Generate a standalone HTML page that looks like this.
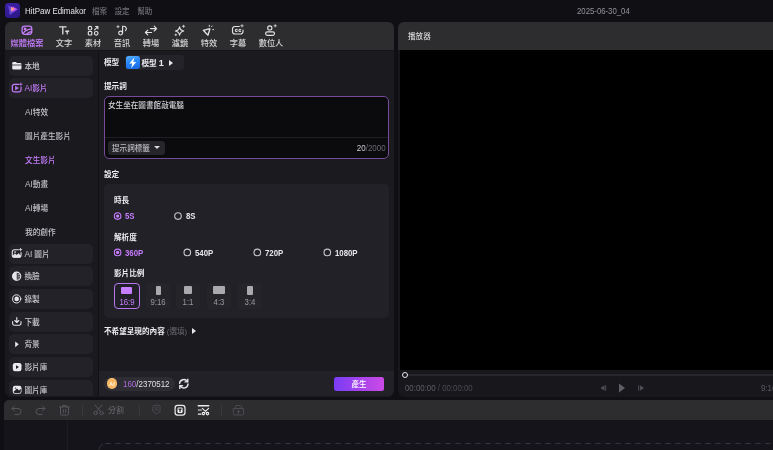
<!DOCTYPE html>
<html lang="zh-Hant">
<head>
<meta charset="utf-8">
<title>HitPaw Edimakor</title>
<style>
*{box-sizing:border-box;margin:0;padding:0}
html,body{width:773px;height:450px;overflow:hidden;background:#100f14}
body{position:relative;font-family:"Liberation Sans","Noto Sans CJK TC",sans-serif;color:#d8d8dc;font-size:8px;line-height:1}
#root{position:absolute;left:0;top:0;width:773px;height:450px;will-change:transform;overflow:hidden}
.abs{position:absolute}
.cj{margin-top:.6px;font-weight:500}
.la{font-size:108%}
.nx{transform:scaleX(.855);transform-origin:0 50%}
.nxr{transform:scaleX(.855);transform-origin:100% 50%}
.t{position:absolute;white-space:nowrap;line-height:12px;height:12px}
/* title bar */
#logo{left:4.5px;top:3.2px;width:15.2px;height:14.8px;border-radius:3.5px;background:linear-gradient(160deg,#3d22a8,#2a1684)}
/* left panel */
#lp{left:5px;top:22px;width:389px;height:374.5px;border-radius:6px;background:#1b1a1f;overflow:hidden}
#tb{left:0;top:0;width:389px;height:28px;background:#2d2d2f}
#sb{left:0;top:28px;width:93px;height:347px;background:#1a191e}
#sbline{left:93px;top:28px;width:1.2px;height:347px;background:#111015}
.si{position:absolute;left:4px;width:84.2px;height:20px;border-radius:5px;background:#232228}
.sl{margin-top:1px;position:absolute;left:20px;font-weight:500;font-size:7.65px;line-height:12px;color:#c9c9cf;white-space:nowrap}
.tl{margin-top:.6px;position:absolute;font-weight:500;font-size:8.2px;line-height:12px;top:15px;color:#d4d4d8;white-space:nowrap;transform:translateX(-50%)}
.ti{position:absolute;top:2px;width:14px;height:14px;transform:translateX(-50%)}
/* content */
#ta{left:103.5px;top:95.5px;width:285.5px;height:63px;border:1.1px solid #744a99;border-radius:5px;background:#0b0a0d}
#set{left:103.6px;top:184px;width:285.4px;height:134.4px;border-radius:5px;background:#222127}
.h{margin-top:.6px;position:absolute;font-weight:bold;font-size:7.6px;line-height:12px;color:#ececf0;white-space:nowrap}
.rd{position:absolute;width:7.6px;height:7.6px;margin:-.3px;border-radius:50%;border:1.1px solid #c8c8cc}
.rd.on{border-color:#c77dff}
.rd.on::after{content:"";position:absolute;left:1px;top:1px;width:3.4px;height:3.4px;border-radius:50%;background:#c77dff}
.rl{position:absolute;font-weight:bold;font-size:9.2px;transform:scaleX(.85);transform-origin:0 50%;line-height:12px;color:#e6e6ea;white-space:nowrap}
.rl.on{color:#c77dff}
.rb{position:absolute;top:282.5px;width:24px;height:26px;border-radius:4px;background:#252429}
.rb span{position:absolute;left:0;width:100%;text-align:center;top:13px;transform:scaleX(.855);font-size:9.1px;line-height:12px;color:#9a9aa2}
.rb i{position:absolute;background:#a9a9ae;border-radius:1px}
/* player */
#pp{left:398px;top:22px;width:380px;height:374.5px;border-radius:6px 0 0 6px;background:#18171c;overflow:hidden}
#ph{left:0;top:0;width:380px;height:28px;background:#2d2d2f}
#pv{left:1.5px;top:28px;width:380px;height:320px;background:#000}
/* timeline */
#tp{left:4px;top:400.2px;width:775px;height:60px;border-radius:5px 0 0 0;background:#15141b;overflow:hidden}
#tt{left:0;top:0;width:775px;height:19.5px;background:#2d2d2f}
</style>
</head>
<body>
<div id="root">
<!-- title bar -->
<div class="abs" id="logo">
<svg width="15.2" height="14.8" viewBox="0 0 15.2 14.8">
<path d="M3.2 2.4 L12.4 6.4 L4.8 12 Z" fill="#6f52e6" opacity=".85"/>
<path d="M7.4 3.2 L12.6 6.3 L7.4 9 Z" fill="#c850f0"/>
<path d="M6 3.8 L9.6 6.1 L6 8.4 Z" fill="#ff9c88"/>
</svg>
</div>
<div class="t nx" style="left:24.6px;top:5.3px;font-size:9.3px;color:#e6e6ea">HitPaw Edimakor</div>
<div class="t cj" style="left:92px;top:5px;font-size:7.6px;color:#6e6e76">檔案</div>
<div class="t cj" style="left:114.5px;top:5px;font-size:7.6px;color:#6e6e76">設定</div>
<div class="t cj" style="left:137.2px;top:5px;font-size:7.6px;color:#6e6e76">幫助</div>
<div class="t nx" style="left:577px;top:5px;font-size:9.1px;color:#94949c">2025-06-30_04</div>

<!-- left panel -->
<div class="abs" id="lp">
  <div class="abs" id="tb"></div>
  <div class="abs" id="sb"></div>
  <div class="abs" id="sbline"></div>
  <div class="abs" style="left:0;top:27.6px;width:389px;height:1px;background:#151419"></div>
</div>

<!-- toolbar items (page coords) -->
<div class="tl" style="left:27px;top:37px;color:#c77dff">媒體檔案</div>
<div class="tl" style="left:64px;top:37px">文字</div>
<div class="tl" style="left:93px;top:37px">素材</div>
<div class="tl" style="left:122px;top:37px">音訊</div>
<div class="tl" style="left:151px;top:37px">轉場</div>
<div class="tl" style="left:180px;top:37px">濾鏡</div>
<div class="tl" style="left:209px;top:37px">特效</div>
<div class="tl" style="left:238px;top:37px">字幕</div>
<div class="tl" style="left:271px;top:37px">數位人</div>

<!-- sidebar items -->
<div class="si" style="left:9px;top:55.6px"></div><div class="sl" style="left:24.4px;top:59.6px">本地</div>
<div class="si" style="left:9px;top:78px"></div><div class="sl" style="left:24.4px;top:82px;color:#c77dff"><span class="la">AI</span>影片</div>
<div class="sl" style="left:25px;top:105.5px;color:#c2c2c8"><span class="la">AI</span>特效</div>
<div class="sl" style="left:25px;top:129.5px;color:#c2c2c8">圖片產生影片</div>
<div class="sl" style="left:25px;top:153.5px;color:#c77dff">文生影片</div>
<div class="sl" style="left:25px;top:177.5px;color:#c2c2c8"><span class="la">AI</span>動畫</div>
<div class="sl" style="left:25px;top:201.5px;color:#c2c2c8"><span class="la">AI</span>轉場</div>
<div class="sl" style="left:25px;top:225.5px;color:#c2c2c8">我的創作</div>
<div class="si" style="left:9px;top:243.5px"></div><div class="sl" style="left:24.4px;top:247.5px"><span class="la">AI</span> 圖片</div>
<div class="si" style="left:9px;top:266.3px"></div><div class="sl" style="left:24.4px;top:270.3px">換臉</div>
<div class="si" style="left:9px;top:289px"></div><div class="sl" style="left:24.4px;top:293px">錄製</div>
<div class="si" style="left:9px;top:311.7px"></div><div class="sl" style="left:24.4px;top:315.7px">下載</div>
<div class="si" style="left:9px;top:334.4px"></div><div class="sl" style="left:24.4px;top:338.4px">背景</div>
<div class="si" style="left:9px;top:357.1px"></div><div class="sl" style="left:24.4px;top:361.1px">影片庫</div>
<div class="si" style="left:9px;top:379.8px;height:16.7px;border-radius:5px 5px 0 6px"></div><div class="sl" style="left:24.4px;top:383.8px">圖片庫</div>


<!-- icon overlay in page coordinates -->
<svg class="abs" style="left:0;top:0" width="773" height="450" viewBox="0 0 773 450" fill="none" stroke-linecap="round" stroke-linejoin="round">
<g stroke="#c77dff" stroke-width="1.25">
<rect x="22.1" y="26.1" width="9.7" height="8.2" rx="2.5"/>
<circle cx="25" cy="28.9" r="0.75"/>
<path d="M23.4 33.2 C24.8 30.6 27.8 29.4 31.4 28.9 M27 33.9 C28 32.5 29.5 31.8 31.5 31.6"/>
</g>
<g stroke="#e2e2e6" stroke-width="1.15">
<!-- text -->
<path d="M59.5 26.8 H66.1 M62.8 26.8 V33.9" stroke-width="1.3"/>
<path d="M65.6 31 H68.8 L67.2 32.2 Z M67.2 31 V34" stroke-width="1.1" fill="#e2e2e6"/>
<!-- elements -->
<circle cx="90" cy="28.2" r="1.8"/><circle cx="96.2" cy="33.3" r="1.8"/>
<rect x="88.3" y="31.5" width="3.5" height="3.5" rx=".8"/>
<path d="M94.6 29.8 L97.6 26.8 M95.6 26.5 H97.9 V28.8"/>
<!-- audio -->
<circle cx="120.6" cy="33.1" r="1.9"/>
<path d="M122.6 33 V26.4 C125.6 25.7 127.6 28.4 125.5 30.7"/>
<path d="M118 25.6 V27.8 M116.9 26.7 H119.1" stroke-width=".8"/>
<!-- transition -->
<path d="M150.6 28.6 H156.5 M154.2 26.2 L156.6 28.6 L154.2 31"/>
<path d="M151.6 32.5 H145.4 M147.8 30.1 L145.4 32.5 L147.8 34.9"/>
<!-- filter -->
<path d="M179.6 26.8 C180.1 29.6 181 30.5 183.8 31 C181 31.5 180.1 32.4 179.6 35.2 C179.1 32.4 178.2 31.5 175.4 31 C178.2 30.5 179.1 29.6 179.6 26.8Z"/>
<path d="M183.6 25.2 V27.4 M182.5 26.3 H184.7 M175.8 34 V35.6 M175 34.8 H176.6" stroke-width=".8"/>
<!-- effects -->
<path d="M203.3 30.3 L209.9 28.7 L208 35.2 Z" stroke-width="1.3"/>
<path d="M209.3 25.3 V26.3 M211.6 26.6 L212.2 26 M212.8 29.6 H213.6" stroke-width="1"/>
<!-- caption -->
<path d="M239.3 26.5 H235 A2.5 2.5 0 0 0 232.5 29 V31.5 A2.5 2.5 0 0 0 235 34 H240.5 A2.5 2.5 0 0 0 243 31.5 V30"/>
<path d="M237.2 29.6 A1.1 1.1 0 1 0 237.2 31.2 M240.7 29.6 A1.1 1.1 0 1 0 240.7 31.2" stroke-width="1.05"/>
<path d="M242 24.6 V27 M240.8 25.8 H243.2" stroke-width=".8"/>
<!-- digital human -->
<circle cx="269.8" cy="27.9" r="2.1"/>
<rect x="265.6" y="31.8" width="8.9" height="3.5" rx="1.75"/>
<path d="M275.2 24.6 V27 M274 25.8 H276.4" stroke-width=".8"/>
</g>
<!-- sidebar icons -->
<path d="M12.2 63.2 A1.3 1.3 0 0 1 13.5 61.9 H15.8 L17 63 H20.2 A1.3 1.3 0 0 1 21.5 64.3 V68.2 A1.3 1.3 0 0 1 20.2 69.5 H13.5 A1.3 1.3 0 0 1 12.2 68.2 Z" fill="#ebebef"/>
<path d="M12.2 65 H21.5" stroke="#2a292f" stroke-width=".8"/>
<g stroke="#c77dff" stroke-width="1.2">
<path d="M18.6 84.4 H14.2 A1.9 1.9 0 0 0 12.3 86.3 V90 A1.9 1.9 0 0 0 14.2 91.9 H19.1 A1.9 1.9 0 0 0 21 90 V87"/>
<path d="M15.5 86.6 V89.8 L18.2 88.2 Z" fill="#c77dff" stroke-width=".6"/>
<path d="M20.8 83 V85.4 M19.6 84.2 H22" stroke-width=".8"/>
</g>
<g stroke="#e6e6ea" stroke-width="1.1">
<!-- AI image -->
<path d="M18.4 249.8 H14.2 A1.9 1.9 0 0 0 12.3 251.7 V255.4 A1.9 1.9 0 0 0 14.2 257.3 H19.1 A1.9 1.9 0 0 0 21 255.4 V252.6"/>
<path d="M12.6 256 L15 253.6 L16.6 255.2 L18.4 253.4 L20.8 255.8 V256.4 A.9 .9 0 0 1 19.9 257.3 H13.6 Z" fill="#e6e6ea" stroke-width=".4"/>
<circle cx="15" cy="252" r=".6" fill="#e6e6ea" stroke-width=".4"/>
<path d="M20.6 248.4 V250.8 M19.4 249.6 H21.8" stroke-width=".8"/>
<!-- face swap -->
<circle cx="16.7" cy="276.2" r="4.1"/>
<path d="M16.7 272.1 A4.1 4.1 0 0 0 16.7 280.3 Z" fill="#e6e6ea" stroke-width=".4"/>
<path d="M18.3 274.4 H19.4 M18.3 276.2 H19.8 M18.3 278 H19.4" stroke-width=".7"/>
<!-- record -->
<circle cx="16.7" cy="298.9" r="4.1" stroke-width="1"/>
<circle cx="16.7" cy="298.9" r="2.3" fill="#e6e6ea" stroke="none"/>
<!-- download -->
<path d="M12.6 321.5 V323.6 A1.6 1.6 0 0 0 14.2 325.2 H19.4 A1.6 1.6 0 0 0 21 323.6 V321.5"/>
<path d="M16.8 317.6 V322.4 M14.8 320.5 L16.8 322.5 L18.8 320.5"/>
</g>
<!-- background arrow -->
<path d="M15.2 341.4 L18.7 344.3 L15.2 347.2 Z" fill="#ebebef"/>
<!-- video lib -->
<rect x="12.8" y="363" width="8.7" height="8.2" rx="2.2" fill="#ebebef"/>
<path d="M16 365.3 V368.9 L19 367.1 Z" fill="#232228"/>
<!-- image lib -->
<rect x="12.8" y="385.7" width="8.7" height="8" rx="2.2" fill="#ebebef"/>
<path d="M13.6 391.8 L17 388.4 L19 390.4 L20.8 388.8 V391.6 A1.4 1.4 0 0 1 19.4 393 H14.6 Z" fill="#232228"/>
<circle cx="15.4" cy="388.1" r=".7" fill="#232228"/>
</svg>

<!-- content -->
<div class="h" style="left:104px;top:56.5px">模型</div>
<div class="abs" style="left:125px;top:55px;width:59px;height:14.5px;border-radius:3px;background:#242329"></div>
<div class="abs" style="left:126px;top:55.5px;width:13.5px;height:13.5px;border-radius:2.5px;background:linear-gradient(165deg,#56b2ff,#2a86f6 45%,#1667e6)">
<svg width="13.5" height="13.5" viewBox="0 0 14 14"><path d="M8.7 1.5 L3.5 7.9 H6.5 L5.3 12.6 L10.6 6.1 H7.6 Z" fill="#fff"/></svg></div>
<div class="h" style="left:141.5px;top:56.5px">模型 <span style="font-size:9px">1</span></div>
<div class="abs" style="left:169px;top:59.5px;width:0;height:0;border-left:4px solid #e8e8ec;border-top:3px solid transparent;border-bottom:3px solid transparent"></div>

<div class="h" style="left:104px;top:80.5px">提示詞</div>
<div class="abs" id="ta"></div>
<div class="t cj" style="left:108px;top:99px;font-size:7.6px;color:#d2d2d6">女生坐在圖書館敲電腦</div>
<div class="abs" style="left:104.5px;top:137px;width:283.5px;height:1px;background:#1f1e24"></div>
<div class="abs" style="left:107.5px;top:141px;width:57.5px;height:13.5px;border-radius:3px;background:#26252a"></div>
<div class="t cj" style="left:112px;top:142px;font-size:7.6px;color:#bcbcc2">提示詞標籤</div>
<div class="abs" style="left:153.6px;top:146.2px;width:0;height:0;border-top:3.5px solid #dcdce0;border-left:3.1px solid transparent;border-right:3.1px solid transparent"></div>
<div class="t nxr" style="right:387px;top:142.3px;font-size:9.3px;color:#6a6a72"><span style="color:#d0d0d4">20</span>/2000</div>

<div class="h" style="left:104px;top:168px">設定</div>
<div class="abs" id="set"></div>
<div class="h" style="left:114px;top:194px">時長</div>
<div class="rl on" style="left:125px;top:210px">5S</div>
<div class="rl" style="left:186px;top:210px">8S</div>
<div class="h" style="left:114px;top:231px">解析度</div>
<div class="rl on" style="left:125px;top:246.5px">360P</div>
<div class="rl" style="left:195px;top:246.5px">540P</div>
<div class="rl" style="left:265px;top:246.5px">720P</div>
<div class="rl" style="left:335px;top:246.5px">1080P</div>
<svg class="abs" style="left:100px;top:200px" width="300" height="70" viewBox="100 200 300 70" fill="none" stroke-width="1.1">
<g stroke="#c77dff"><circle cx="117.6" cy="216.1" r="3.3"/><circle cx="117.6" cy="252.4" r="3.3"/></g>
<g fill="#c77dff"><circle cx="117.6" cy="216.1" r="1.7"/><circle cx="117.6" cy="252.4" r="1.7"/></g>
<g stroke="#c6c6ca"><circle cx="178" cy="216.1" r="3.3"/><circle cx="187.3" cy="252.4" r="3.3"/><circle cx="257.3" cy="252.4" r="3.3"/><circle cx="327.3" cy="252.4" r="3.3"/></g>
</svg>
<div class="h" style="left:114px;top:267.5px">影片比例</div>
<div class="rb" style="left:113.5px;width:26px;border:1px solid #b877ee;background:#211f27"><i style="left:6.5px;top:3px;width:11px;height:7.5px;background:#c77dff"></i><span style="color:#c77dff;top:12px">16:9</span></div>
<div class="rb" style="left:145.5px"><i style="left:10px;top:3px;width:5.5px;height:9px"></i><span>9:16</span></div>
<div class="rb" style="left:176px"><i style="left:8px;top:3.5px;width:8px;height:8px"></i><span>1:1</span></div>
<div class="rb" style="left:207px"><i style="left:6px;top:3.5px;width:12px;height:8px"></i><span>4:3</span></div>
<div class="rb" style="left:237.5px"><i style="left:9.5px;top:3px;width:6px;height:9px"></i><span>3:4</span></div>

<div class="h" style="left:104px;top:325px">不希望呈現的內容 <span style="font-weight:normal;color:#66666e">(選填)</span></div>
<div class="abs" style="left:192px;top:328px;width:0;height:0;border-left:4px solid #e8e8ec;border-top:3px solid transparent;border-bottom:3px solid transparent"></div>

<!-- bottom bar -->
<div class="abs" style="left:99.2px;top:371.2px;width:294.8px;height:25.3px;background:#222127;border-radius:0 0 6px 0"></div>
<div class="abs" style="left:104px;top:377px;width:70.5px;height:14px;border-radius:7px;background:#2e2d33"></div>
<div class="abs" style="left:106.5px;top:378.2px;width:10.8px;height:10.8px;border-radius:50%;background:radial-gradient(circle at 50% 50%,#f8b45c 0,#f7b660 55%,#ffd9a0 100%)"></div>
<div class="t" style="left:106.5px;width:10.8px;text-align:center;top:378px;font-size:5.6px;font-weight:bold;color:#fff6e2">AI</div>
<div class="t" style="left:123px;top:378px;font-size:9.4px;transform:scaleX(.85);transform-origin:0 50%;color:#e0e0e4"><span style="color:#b06ae0">160</span>/2370512</div>
<svg class="abs" style="left:178.4px;top:378.2px" width="11.6" height="11.6" viewBox="0 0 11 11" fill="none" stroke="#e6e6ea" stroke-width="1.3" stroke-linecap="round" stroke-linejoin="round"><path d="M1.5 5.3 A4 4 0 0 1 8.9 3.4"/><path d="M9.3 1.1 V3.7 H6.7"/><path d="M9.5 5.7 A4 4 0 0 1 2.1 7.6"/><path d="M1.7 9.9 V7.3 H4.3"/></svg>
<div class="abs" style="left:334px;top:377px;width:50px;height:14px;border-radius:2.5px;background:linear-gradient(90deg,#7a3cf4,#cc4ae6)"></div>
<div class="t cj" style="left:334px;width:50px;text-align:center;top:378px;font-size:7.6px;color:#fff">產生</div>

<!-- player -->
<div class="abs" id="pp">
  <div class="abs" id="ph"></div>
  <div class="abs" id="pv"></div>
  <div class="abs" style="left:6px;top:352px;width:380px;height:2px;background:#26262d"></div>
  <div class="abs" style="left:3.6px;top:349.8px;width:6.4px;height:6.4px;border-radius:50%;border:1.6px solid #e8e8ec;background:#18171c"></div>
</div>
<div class="t cj" style="left:408px;top:30.5px;font-size:7.6px;color:#d6d6da">播放器</div>
<div class="t nx" style="left:404.5px;top:382px;font-size:9.2px;color:#4a4a52"><span style="color:#5e5e66">00:00:00</span> / 00:00:00</div>
<svg class="abs" style="left:598px;top:382px" width="50" height="12" viewBox="0 0 50 12" fill="#4e4e56"><path d="M2.5 6 L6.5 3.2 V8.8 Z"/><rect x="7.2" y="3.2" width="1" height="5.6"/><path d="M21 1.5 L27 6 L21 10.5 Z" fill="#5e5e66"/><rect x="40.2" y="3.2" width="1" height="5.6"/><path d="M46 6 L42 3.2 V8.8 Z"/></svg>
<div class="t nx" style="left:761px;top:382px;font-size:9.2px;color:#5a5a62">9:16</div>

<!-- timeline -->
<div class="abs" id="tp">
  <div class="abs" id="tt"></div>
  <div class="abs" style="left:63px;top:20px;width:1px;height:40px;background:#1e1d23"></div>
</div>
<div class="t cj" style="left:108px;top:404px;font-size:8px;font-weight:500;color:#64646a">分割</div>
<div class="abs" style="left:81.5px;top:404.5px;width:1px;height:11px;background:#39393c"></div>
<div class="abs" style="left:138.5px;top:404.5px;width:1px;height:11px;background:#39393c"></div>
<div class="abs" style="left:221px;top:404.5px;width:1px;height:11px;background:#39393c"></div>
<svg class="abs" style="left:0;top:400px" width="260" height="20" viewBox="0 0 260 20" fill="none" stroke="#55555b" stroke-width="1" stroke-linecap="round" stroke-linejoin="round">
<!-- undo -->
<path d="M14.5 6 L12 8.5 L14.5 11 M12 8.5 H18 A3 3 0 0 1 18 14.5 H15"/>
<!-- redo -->
<path d="M42.5 6 L45 8.5 L42.5 11 M45 8.5 H39 A3 3 0 0 0 39 14.5 H42"/>
<!-- trash -->
<path d="M59.5 7 H69.5 M62.5 7 V5.5 H66.5 V7 M60.5 7 V14 A1 1 0 0 0 61.5 15 H67.5 A1 1 0 0 0 68.5 14 V7 M63.3 9.5 V12.5 M65.7 9.5 V12.5"/>
<!-- scissors -->
<circle cx="95.5" cy="13" r="1.7"/><circle cx="101.5" cy="13" r="1.7"/><path d="M96.5 11.6 L102 5 M100.5 11.6 L95 5"/>
<!-- marker -->
<path d="M153 6.4 A1 1 0 0 1 154 5.4 H159 A1 1 0 0 1 160 6.4 V11.4 L156.5 14 L153 11.4 Z M155 7.9 H158 M155 9.9 H158" stroke="#49494f"/>
<!-- T box -->
<rect x="175.1" y="5.3" width="9.9" height="9.8" rx="2.6" stroke="#ececf0" stroke-width="1.2"/><rect x="177.5" y="7.5" width="5.1" height="5.4" rx="1.2" fill="#f4f4f8" stroke="none"/><path d="M178.5 9.1 H181.6 M180.05 9.1 V11.9" stroke="#1d1d1f" stroke-width="1.25" stroke-linecap="butt"/>
<!-- cut list -->
<g stroke="#ececf0" stroke-width="1.15"><path d="M198.3 5.7 H208.7" stroke-width="1.5"/><path d="M198.3 10 H201.3 M198.3 14.1 H201"/><circle cx="203.4" cy="13.6" r="1.2"/><circle cx="207.5" cy="13.6" r="1.2"/><path d="M204.1 12.6 L208.6 8.4 M206.8 12.6 L202.3 8.4"/></g>
<!-- export -->
<path stroke="#4a4a50" d="M233.5 8.5 H243.5 V14 A1 1 0 0 1 242.5 15 H234.5 A1 1 0 0 1 233.5 14 Z M235.5 8.5 V6.5 A1 1 0 0 1 236.5 5.5 H240.5 A1 1 0 0 1 241.5 6.5 V8.5 M238.5 13.5 V10.5 M237 11.8 L238.5 10.3 L240 11.8"/>
</svg>
<svg class="abs" style="left:98px;top:440px" width="680" height="12" viewBox="0 0 680 12" fill="none" stroke="#34343d" stroke-width="1"><path d="M0.8 9.5 Q1.5 5.5 5.2 4"/><path d="M7.3 3.5 H680" stroke-dasharray="5.4 4.6"/></svg>
</div>
</body>
</html>
